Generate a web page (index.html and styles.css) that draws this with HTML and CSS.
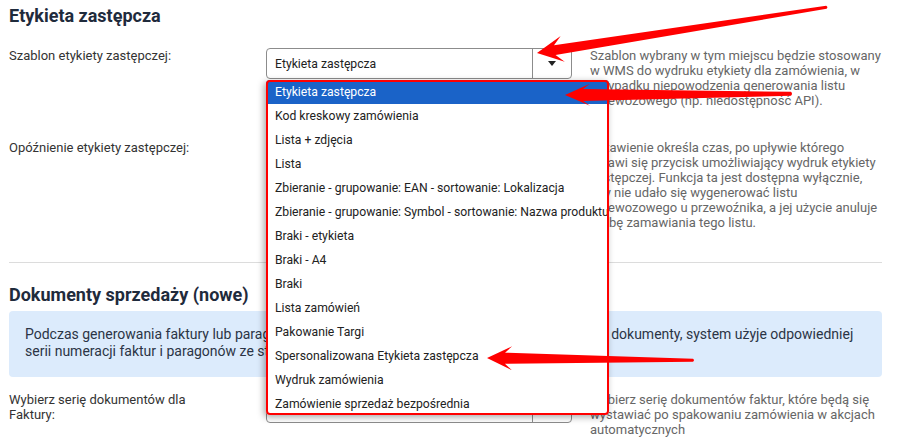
FILE: index.html
```html
<!DOCTYPE html>
<html lang="pl">
<head>
  <meta charset="UTF-8" />
  <meta name="viewport" content="width=device-width, initial-scale=1.0"/>
  <title>Ustawienia - etykiety i dokumenty</title>
  <link rel="stylesheet" href="styles.css">
</head>
<body>

  <div class="page">

    <section class="settings">
      <h2 class="section-title">Etykieta zastępcza</h2>

      <div class="field">
        <label class="field-label">Szablon etykiety zastępczej:</label>
        <div class="field-control">
          <div class="select">
            <span class="select-value">Etykieta zastępcza</span>
            <span class="select-btn"><i class="caret"></i></span>
          </div>

          <ul class="select-list">
            <li class="selected">Etykieta zastępcza</li>
            <li>Kod kreskowy zamówienia</li>
            <li>Lista + zdjęcia</li>
            <li>Lista</li>
            <li>Zbieranie - grupowanie: EAN - sortowanie: Lokalizacja</li>
            <li>Zbieranie - grupowanie: Symbol - sortowanie: Nazwa produktu</li>
            <li>Braki - etykieta</li>
            <li>Braki - A4</li>
            <li>Braki</li>
            <li>Lista zamówień</li>
            <li>Pakowanie Targi</li>
            <li>Spersonalizowana Etykieta zastępcza</li>
            <li>Wydruk zamówienia</li>
            <li>Zamówienie sprzedaż bezpośrednia</li>
          </ul>
        </div>
        <p class="field-help">Szablon wybrany w tym miejscu będzie stosowany w WMS do wydruku etykiety dla zamówienia, w przypadku niepowodzenia generowania listu przewozowego (np. niedostępność API).</p>
      </div>

      <div class="field">
        <label class="field-label">Opóźnienie etykiety zastępczej:</label>
        <div class="field-control">
          <input class="input" type="text" value="0" />
        </div>
        <p class="field-help">Ustawienie określa czas, po upływie którego pojawi się przycisk umożliwiający wydruk etykiety zastępczej. Funkcja ta jest dostępna wyłącznie, gdy nie udało się wygenerować listu przewozowego u przewoźnika, a jej użycie anuluje próbę zamawiania tego listu.</p>
      </div>
    </section>

    <hr class="divider">

    <section class="settings">
      <h2 class="section-title tight">Dokumenty sprzedaży (nowe)</h2>

      <div class="info">
        Podczas generowania faktury lub paragonu dla zamówień, dla których nie wystawiono jeszcze dokumenty, system użyje odpowiedniej<br>
        serii numeracji faktur i paragonów ze stosownej konfiguracji źródła zamówienia.
      </div>

      <div class="field">
        <label class="field-label">Wybierz serię dokumentów dla Faktury:</label>
        <div class="field-control">
          <div class="select">
            <span class="select-value">Faktura VAT</span>
            <span class="select-btn"><i class="caret"></i></span>
          </div>
        </div>
        <p class="field-help">Wybierz serię dokumentów faktur, które będą się wystawiać po spakowaniu zamówienia w akcjach automatycznych</p>
      </div>
    </section>

    <!-- red arrows drawn on top of the form -->
    <svg class="marks" width="899" height="448" viewBox="0 0 899 448">
      <g fill="#f00">
        <path transform="translate(537 53) rotate(-9)" d="M0 0 L26 -13 L18 -5 L293 -1.5 Q295 0 293 1.5 L18 5 L26 13 Z" />
        <path transform="translate(565 95) rotate(-0.3)" d="M0 0 L25 -11 L18 -6 L226 -2 Q228 0 226 2 L18 6 L25 11 Z" />
        <path transform="translate(487 358) rotate(0.6)" d="M0 0 L25 -12 L18 -5.5 L206 -1.5 Q208 0 206 1.5 L18 5.5 L25 12 Z" />
      </g>
    </svg>

  </div>

</body>
</html>
```

FILE: styles.css
```css
* {
  margin: 0;
  padding: 0;
  box-sizing: border-box;
}

body, html {
  height: 100%;
  background: #fff;
  font-family: Roboto, 'Liberation Sans', Arial, sans-serif;
}

.page {
  position: relative;
  height: 448px;
  overflow: hidden;
  padding: 5px 17px 0 9px;
}

.section-title {
  font-size: 18px;
  line-height: 22px;
  font-weight: 700;
  color: #1f2b3c;
  margin-bottom: 21px;
}

.section-title.tight {
  margin-bottom: 5px;
}

.field {
  display: grid;
  grid-template-columns: 257px 306px 1fr;
  align-items: start;
}

.field + .field {
  margin-top: 32px;
}

.field-label {
  max-width: 200px;
  font-size: 13px;
  line-height: 15px;
  color: #333;
}

.field-control {
  position: relative;
}

.field-help {
  padding-left: 18px;
  font-size: 13px;
  line-height: 15px;
  color: #666;
}

.select {
  display: flex;
  height: 31px;
  border: 1px solid #8c8c8c;
  border-radius: 4px;
  background: #fff;
  font-size: 12.2px;
  color: #222;
}

.select-value {
  flex: 1;
  padding: 0 8px;
  line-height: 30px;
  white-space: nowrap;
  overflow: hidden;
}

.select-btn {
  width: 39px;
  border-left: 1px solid #8c8c8c;
  display: flex;
  align-items: center;
  justify-content: center;
}

.caret {
  width: 0;
  height: 0;
  border-left: 4.5px solid transparent;
  border-right: 4.5px solid transparent;
  border-top: 5px solid #222;
}

.input {
  width: 100%;
  height: 31px;
  padding: 0 8px;
  font-size: 12px;
  border: 1px solid #8c8c8c;
  border-radius: 4px;
  outline: none;
}

/* open option list of the first select */
.select-list {
  position: absolute;
  top: 32px;
  left: 0;
  width: 343px;
  height: 335px;
  overflow: hidden;
  list-style: none;
  background: #fff;
  border-radius: 4px;
  outline: 2px solid #f00;
  outline-offset: -2px;
  box-shadow: -2px 2px 7px rgba(0, 0, 0, 0.35);
  z-index: 5;
}

.select-list li {
  height: 24px;
  line-height: 25px;
  padding: 0 9px;
  font-size: 12.2px;
  color: #222;
  white-space: nowrap;
}

.select-list li.selected {
  background-color: #1a63c8;
  color: #fff;
}

.divider {
  border: 0;
  border-top: 1px solid #dcdcdc;
  margin: 32px 0 21px;
}

.info {
  background-color: #dcebfc;
  border-radius: 4px;
  padding: 15px 16px 17px;
  font-size: 14px;
  line-height: 17px;
  color: #2b3445;
  margin-bottom: 15px;
  white-space: nowrap;
}

.marks {
  position: absolute;
  top: 0;
  left: 0;
  pointer-events: none;
  z-index: 10;
}
```
